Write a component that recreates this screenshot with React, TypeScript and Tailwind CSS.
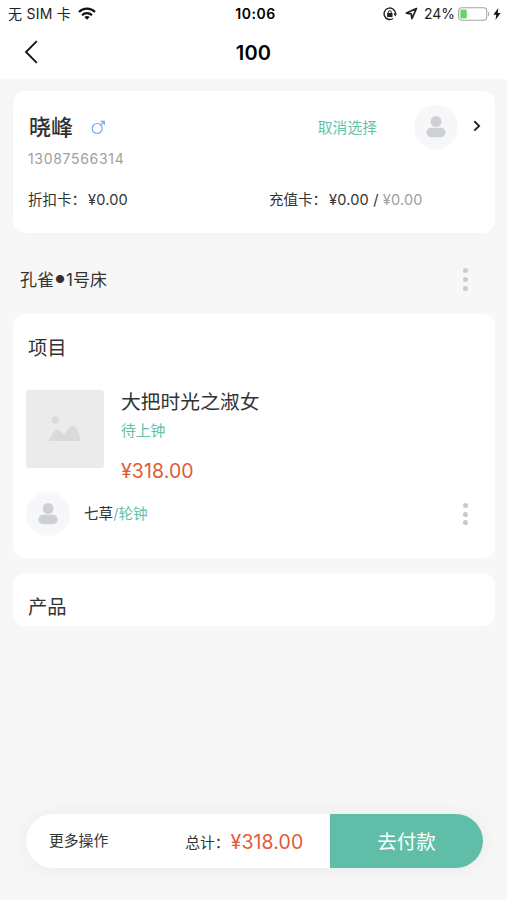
import React from 'react';

const MaleIcon: React.FC = () => (
  <svg width="15" height="15" viewBox="0 0 15 15" fill="none" stroke="#74a7f5" strokeWidth="1.2">
    <circle cx="6.2" cy="8.5" r="5" />
    <path d="M9.7 4.9 13 1.7M9.6 1.3h3.7v3.6" />
    <path d="M10.6 1.3h2.7v2.7z" fill="#74a7f5" stroke="none" />
  </svg>
);

const Avatar: React.FC = () => (
  <div className="flex h-11 w-11 shrink-0 items-center justify-center rounded-full bg-[#f6f7f8]">
    <svg width="20" height="22" viewBox="0 0 20 22" fill="#cfd0d4">
      <rect x="4.8" y="0.3" width="10.6" height="10.6" rx="4.6" />
      <rect x="0.4" y="11.7" width="19.2" height="9.6" rx="4.8" />
    </svg>
  </div>
);

const MoreDots: React.FC = () => (
  <button className="flex w-5 flex-col items-center gap-[3.6px]">
    <span className="h-[5px] w-[5px] rounded-full bg-[#cbcbcb]" />
    <span className="h-[5px] w-[5px] rounded-full bg-[#cbcbcb]" />
    <span className="h-[5px] w-[5px] rounded-full bg-[#cbcbcb]" />
  </button>
);

const StatusBar: React.FC = () => (
  <div className="grid h-7 grid-cols-[1fr_auto_1fr] items-center pl-[8px] pr-[5px] text-[14px] leading-none text-[#222]">
    <div className="flex items-center">
      <span className="whitespace-pre tracking-[0.25px]">无 SIM 卡</span>
      <svg className="mb-[2px] ml-[7px]" width="18" height="13" viewBox="0 0 18 13" fill="none" stroke="#111" strokeWidth="2.2">
        <path d="M1 5C5.4.6 12.6.6 17 5" />
        <path d="M4 8.2c2.8-2.7 7.2-2.7 10 0" />
        <path d="M6.3 10.1c1.5-1.4 3.9-1.4 5.4 0L9 12.8z" fill="#111" stroke="none" />
      </svg>
    </div>
    <span className="pl-px text-[14px] font-semibold tracking-[0.5px] text-black">10:06</span>
    <div className="flex items-center justify-end">
      <svg className="mb-px" width="14" height="14" viewBox="0 0 14 14" fill="none" stroke="#222" strokeWidth="1.4">
        <path d="M12.5 7A5.7 5.7 0 1 0 10 11.5" />
        <path d="M10.5 6.6h3.5l-1.7 2.8z" fill="#222" stroke="none" />
        <path d="M5.3 6.4V5.2a1.5 1.5 0 0 1 3 0v1.2" strokeWidth="1" />
        <rect x="4.1" y="6" width="5.4" height="4" rx="0.5" fill="#222" stroke="none" />
      </svg>
      <svg className="mb-px ml-[8px]" width="13" height="13" viewBox="0 0 13 13" fill="none" stroke="#222" strokeWidth="1.7" strokeLinejoin="round">
        <path d="M11.5 1.5 1.4 6.1l4.8.7.7 4.8z" />
      </svg>
      <span className="ml-[6px]">24%</span>
      <svg className="mb-px ml-[3px]" width="32" height="14" viewBox="0 0 32 14" fill="none">
        <rect x="0.7" y="0.7" width="28" height="12.6" rx="3.2" stroke="#a5a5a5" strokeWidth="1.1" />
        <rect x="2.4" y="2.4" width="6.4" height="9.2" rx="1.4" fill="#65d66d" />
        <path d="M30 4.8c1.6.5 1.6 3.9 0 4.4z" fill="#a5a5a5" />
      </svg>
      <svg className="mb-px ml-[3px] mr-px" width="8" height="12" viewBox="0 0 8 12" fill="#111">
        <path d="M5.3 0 .4 6.7h2.9L2.5 12l5.1-7H4.7z" />
      </svg>
    </div>
  </div>
);

const CustomerCard: React.FC = () => (
  <section className="h-[142px] rounded-xl bg-white pl-[15px] pr-[14px] pt-[14px] shadow-[0_0_14px_rgba(0,0,0,0.02)]">
    <div className="flex h-11 items-center">
      <h2 className="ml-px text-[22px] font-medium leading-none text-[#303030]">晓峰</h2>
      <span className="ml-[18px]"><MaleIcon /></span>
      <button className="ml-auto mr-[37px] mt-[2px] text-[14.8px] leading-none text-[#62c2a9]">取消选择</button>
      <Avatar />
      <svg className="mb-[2px] ml-[15px]" width="8" height="12" viewBox="0 0 8 12" fill="none" stroke="#222" strokeWidth="1.9">
        <path d="m1.3 1.3 4.8 4.6-4.8 4.7" />
      </svg>
    </div>
    <p className="text-[14px] leading-5 tracking-[0.68px] text-[#a0a0a0]">13087566314</p>
    <div className="mt-[21px] flex text-[14.5px] leading-5 text-[#333]">
      <p className="w-[241px]">折扣卡：<span className="ml-[2px] tracking-[0.2px]">¥0.00</span></p>
      <p>
        充值卡：<span className="ml-[2px] tracking-[0.2px]">¥0.00 / </span>
        <span className="tracking-[0.2px] text-[#a0a0a0]">¥0.00</span>
      </p>
    </div>
  </section>
);

const ProjectCard: React.FC = () => (
  <section className="h-[244px] rounded-xl bg-white px-[12.5px] pt-[20px]">
    <h3 className="pl-[2.5px] text-[19.3px] leading-7 text-[#333]">项目</h3>
    <div className="mt-[28px] flex">
      <div className="flex h-[78px] w-[78px] items-center justify-center rounded-[3px] bg-[#ebebeb]">
        <svg width="32" height="26" viewBox="0 0 32 26" fill="#dadada">
          <circle cx="6.3" cy="4" r="3.6" />
          <path d="M.8 25c-.8 0-.8-1-.4-1.8 1.8-3.7 4-7.6 6.8-9.2 1.6-.9 3 .1 4.2 1.2l3.8 3.4 5-6.8c1.8-2.7 4.5-2.8 6.4-.4 2.2 2.8 4.2 7.5 5 11.6.3 1.3-.1 2-1.1 2z" />
        </svg>
      </div>
      <div className="ml-[17.5px] flex flex-col">
        <p className="text-[19.8px] leading-6 text-[#333]">大把时光之淑女</p>
        <p className="mt-[7px] text-[14.8px] leading-5 text-[#62c2a9]">待上钟</p>
        <p className="mt-[18px] text-[19.5px] leading-6 tracking-[0.1px] text-[#e05b38]">¥318.00</p>
      </div>
    </div>
    <div className="mt-[9px] flex items-center">
      <Avatar />
      <p className="ml-[14.5px] mt-[2px] text-[14.6px] text-[#333]">
        七草<span className="text-[#62c2a9]">/轮钟</span>
      </p>
      <div className="ml-auto mr-[7px] flex"><MoreDots /></div>
    </div>
  </section>
);

const CheckoutBar: React.FC = () => (
  <footer className="mb-8 ml-[26px] mt-auto flex h-[54px] w-[457px] overflow-hidden rounded-full bg-white shadow-[0_1px_22px_rgba(0,0,0,0.06)]">
    <div className="flex flex-1 items-center pl-[23px] text-[14.8px] text-[#333]">
      <button className="mt-px">更多操作</button>
      <span className="ml-[77px] mt-[5px]">总计：</span>
      <span className="ml-px mt-[3px] text-[19.5px] tracking-[0.1px] text-[#e05b38]">¥318.00</span>
    </div>
    <button className="w-[153px] bg-[#60bea8] pt-[4px] text-[19.5px] text-white">去付款</button>
  </footer>
);

export default function App() {
  return (
    <div className="flex h-[900px] w-[507px] flex-col overflow-hidden bg-[#f7f7f7] font-['Inter','Noto_Sans_CJK_SC',sans-serif]">
      <header className="h-[79px] bg-white">
        <StatusBar />
        <div className="grid h-12 grid-cols-[1fr_auto_1fr] items-center">
          <button className="ml-6">
            <svg width="14" height="24" viewBox="0 0 14 24" fill="none" stroke="#111" strokeWidth="1.8">
              <path d="M12.8 1.2 2 12l10.8 10.8" />
            </svg>
          </button>
          <h1 className="mt-px text-[20px] font-semibold leading-none tracking-[0.2px] text-black">100</h1>
        </div>
      </header>
      <main className="pl-[13px] pr-3 pt-3">
        <CustomerCard />
        <div className="flex h-[81px] items-center pl-[7px] pr-5 pt-[12px]">
          <p className="mt-[2px] flex items-center text-[17px] leading-none text-[#333]">
            孔雀<span className="mx-px mb-[2px] text-[11px]">●</span>1号床
          </p>
          <div className="ml-auto flex"><MoreDots /></div>
        </div>
        <ProjectCard />
        <section className="mt-[15px] h-[53px] rounded-xl bg-white pl-[15px] pt-[20px]">
          <h3 className="text-[19.3px] leading-7 text-[#333]">产品</h3>
        </section>
      </main>
      <CheckoutBar />
    </div>
  );
}
